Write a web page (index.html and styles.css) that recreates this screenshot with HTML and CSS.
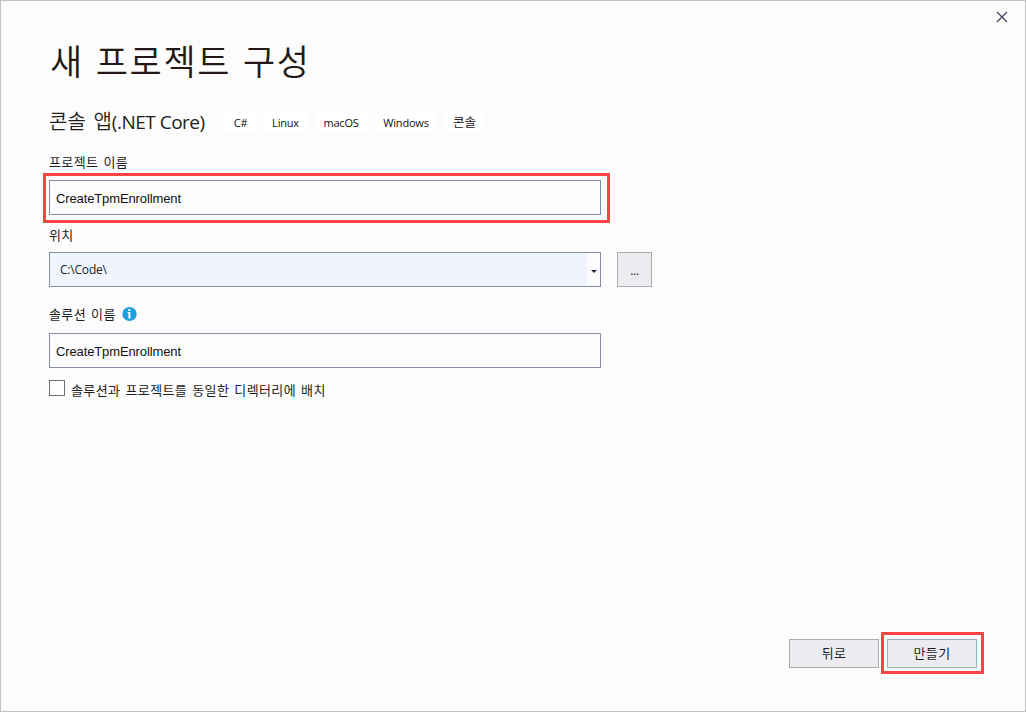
FILE: index.html
```
<!DOCTYPE html>
<html lang="ko">
<head>
<meta charset="utf-8">
<title>새 프로젝트 구성</title>
<link rel="stylesheet" href="styles.css">
</head>
<body>
<div class="window">
  <header class="titlebar">
    <svg class="close" width="12" height="12" viewBox="0 0 12 12"><path d="M1 1L11 11M11 1L1 11" stroke="#3a4258" stroke-width="1.15" fill="none"/></svg>
  </header>
  <main class="content">
    <h1 class="title"><span>새 프로젝트 구성</span></h1>
    <div class="template">
      <h2 class="template-name"><span class="template-ko">콘솔 앱</span><span class="template-en">(.NET Core)</span></h2>
      <div class="tags">
        <span class="tag tag-cs">C#</span>
        <span class="tag tag-linux">Linux</span>
        <span class="tag tag-mac">macOS</span>
        <span class="tag tag-win">Windows</span>
        <span class="tag tag-console">콘솔</span>
      </div>
    </div>
    <label class="label">프로젝트 이름</label>
    <div class="highlight highlight-field"><div class="field">CreateTpmEnrollment</div></div>
    <label class="label label-location">위치</label>
    <div class="location">
      <div class="combo">
        <span class="combo-value">C:\Code\</span>
        <span class="combo-arrow"><svg width="6" height="3" viewBox="0 0 6 3"><path d="M0 0H6L3 3Z" fill="#1b2438"/></svg></span>
      </div>
      <div class="browse"><span>...</span></div>
    </div>
    <label class="label label-solution">솔루션 이름
      <svg class="info" width="15" height="14" viewBox="0 0 15 14"><ellipse cx="7.5" cy="7" rx="7.2" ry="7" fill="#1ba1e2"/><path d="M6.4 2H8.4V4H6.4ZM5.6 5H8.4V11.4H6.4V6H5.6Z" fill="#fff"/></svg>
    </label>
    <div class="field">CreateTpmEnrollment</div>
    <label class="check"><span class="box"></span><span class="check-text">솔루션과 프로젝트를 동일한 디렉터리에 배치</span></label>
  </main>
  <footer class="actions">
    <div class="button">뒤로</div>
    <div class="highlight highlight-button"><div class="button">만들기</div></div>
  </footer>
</div>
</body>
</html>
```
FILE: styles.css
```
* { box-sizing: border-box; }
body {
  margin: 0;
  color: #1e1e1e;
  font-family: "Noto Sans", "Noto Sans CJK KR", sans-serif;
}
.window {
  width: 1026px;
  height: 712px;
  display: flex;
  flex-direction: column;
  background: #fcfcfc;
  border: 1px solid #c2c2c2;
}
.titlebar {
  height: 29px;
  flex: none;
  display: flex;
  justify-content: flex-end;
  padding: 10px 17px 0 0;
}
.content { flex: 1; padding: 0 48px; }
.title {
  margin: 0;
  height: 62px;
  padding-left: 1px;
  font: 350 35px/60px "Noto Sans CJK KR", sans-serif;
  letter-spacing: 1.6px;
  word-spacing: 0.6px;
  white-space: nowrap;
  color: #231815;
}
.template {
  display: flex;
  height: 59px;
  padding-top: 18px;
}
.template-name {
  width: 176px;
  margin: -1px 0 0;
  font-size: 19px;
  line-height: 24px;
  font-weight: 400;
  white-space: nowrap;
}
.template-ko { font: 350 20px/24px "Noto Sans CJK KR", sans-serif; word-spacing: 2px; }
.template-en { font: 400 19px/24px "Open Sans", sans-serif; letter-spacing: -0.5px; }
.tags { display: flex; gap: 8px; padding-top: 2px; }
.tag {
  height: 20px;
  border-radius: 3px;
  background: #fff;
  text-align: center;
  font: 11px/22px "Open Sans", "Noto Sans CJK KR", sans-serif;
  letter-spacing: -0.2px;
  color: #111;
}
.tag-cs { width: 31px; }
.tag-linux { width: 43px; }
.tag-mac { width: 52px; }
.tag-win { width: 62px; }
.tag-console { width: 39px; font-size: 12.5px; line-height: 22px; letter-spacing: 0; }
.label {
  display: flex;
  height: 22px;
  font: 13px/22px "Noto Sans CJK KR", sans-serif;
  letter-spacing: 0.4px;
  word-spacing: 1px;
}
.highlight { border: 3px solid #fd4343; }
.highlight-field {
  width: 567px;
  height: 50px;
  margin-left: -6px;
  padding: 4px 0 0 3px;
}
.field {
  width: 552px;
  height: 35px;
  border: 1px solid #858fa3;
  padding-left: 6px;
  font: 13px/35px "Liberation Sans", Arial, sans-serif;
  letter-spacing: -0.12px;
  color: #111;
}
.label-location { height: 29px; line-height: 24px; }
.location { display: flex; gap: 16px; }
.combo {
  width: 552px;
  height: 35px;
  display: flex;
  justify-content: space-between;
  border: 1px solid #858fa3;
  background: #f0f4fe;
}
.combo-value { padding-left: 10px; font: 12px/34px "Open Sans", sans-serif; letter-spacing: -0.2px; }
.combo-arrow {
  width: 13px;
  display: flex;
  align-items: center;
  justify-content: center;
  padding-top: 3px;
  background: #fcfcfc;
}
.browse {
  width: 35px;
  height: 35px;
  border: 1px solid #acacac;
  background: #ececf0;
  text-align: center;
  font: 12px/35px "Open Sans", sans-serif;
  letter-spacing: -0.3px;
}
.label-solution {
  height: 46px;
  padding-top: 16px;
  gap: 6px;
}
.info { margin-top: 4px; }
.check {
  display: flex;
  gap: 6px;
  padding-top: 12px;
}
.box { width: 16px; height: 16px; border: 1px solid #717171; background: #fff; }
.check-text {
  font: 13px/20px "Noto Sans CJK KR", sans-serif;
  letter-spacing: 0.39px;
  word-spacing: 1px;
  white-space: nowrap;
}
.actions {
  display: flex;
  justify-content: flex-end;
  align-items: flex-start;
  gap: 2px;
  height: 80px;
  padding: 1px 41px 0 0;
}
.button {
  width: 90px;
  height: 29px;
  border: 1px solid #acacac;
  background: #ececf0;
  text-align: center;
  font: 13px/25px "Noto Sans CJK KR", sans-serif;
  letter-spacing: 0.4px;
}
.actions > .button { margin-top: 7px; }
.highlight-button {
  width: 103px;
  height: 42px;
  padding: 4px 0 0 3px;
}
```
